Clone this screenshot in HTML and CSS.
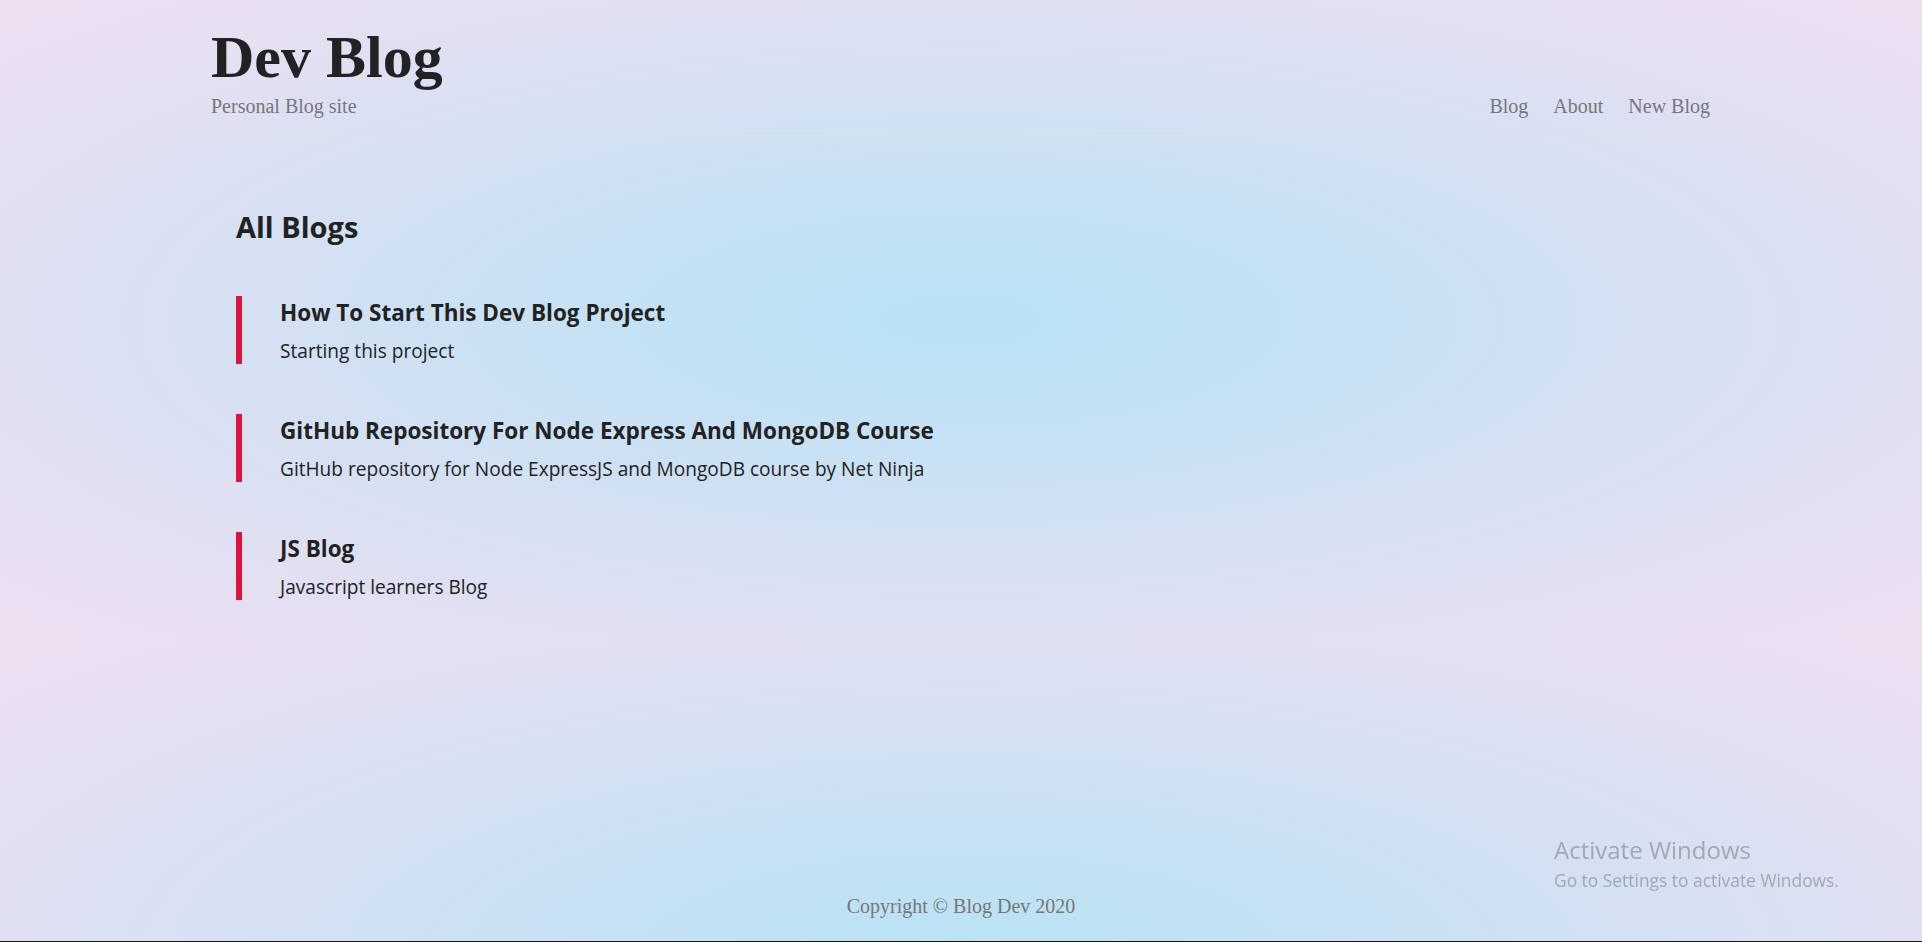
FILE: index.html
```html
<!DOCTYPE html>
<html lang="en">
<head>
<meta charset="utf-8">
<title>Dev Blog</title>
<link rel="stylesheet" href="styles.css">
</head>
<body>
  <div class="site">
    <header class="header">
      <div class="brand">
        <h1 class="brand-title">Dev Blog</h1>
        <p class="brand-sub">Personal Blog site</p>
      </div>
      <nav class="nav">
        <a href="#">Blog</a>
        <a href="#">About</a>
        <a href="#">New Blog</a>
      </nav>
    </header>
    <main class="content">
      <h2 class="page-title">All Blogs</h2>
      <div class="posts">
        <article class="post">
          <h3 class="post-title">How To Start This Dev Blog Project</h3>
          <p class="post-snippet">Starting this project</p>
        </article>
        <article class="post">
          <h3 class="post-title">GitHub Repository For Node Express And MongoDB Course</h3>
          <p class="post-snippet">GitHub repository for Node ExpressJS and MongoDB course by Net Ninja</p>
        </article>
        <article class="post">
          <h3 class="post-title">JS Blog</h3>
          <p class="post-snippet">Javascript learners Blog</p>
        </article>
      </div>
    </main>
  </div>
  <footer class="footer">Copyright © Blog Dev 2020</footer>
  <div class="taskbar-edge"></div>
  <div class="activate">
    <div class="activate-title">Activate Windows</div>
    <div class="activate-sub">Go to Settings to activate Windows.</div>
  </div>
</body>
</html>
```
FILE: styles.css
```css
html {
  min-height: 100%;
  background-color: #e4e0f2;
  background-image: radial-gradient(ellipse farthest-corner at 50% 50%, #b7e2f5 0%, #f0dff1 100%);
  background-size: 100% 640px;
  background-repeat: repeat;
}

body {
  margin: 0;
  min-height: 100vh;
  display: flex;
  flex-direction: column;
}

.site {
  width: 1500px;
  margin: 0 auto;
}

.header {
  display: flex;
  justify-content: space-between;
  align-items: flex-end;
  padding: 27px 0 12px;
  border-bottom: 1px solid #e3dfdb;
}

.brand-title {
  margin: 0;
  font-family: "Liberation Serif", "Times New Roman", serif;
  font-weight: bold;
  font-size: 60px;
  line-height: 60px;
  color: #222;
}

.brand-sub {
  margin: 7px 0 0;
  font-family: "Liberation Serif", "Times New Roman", serif;
  font-size: 20px;
  line-height: 24px;
  color: #777;
}

.nav {
  display: flex;
  gap: 25px;
  padding-right: 1px;
}

.nav a {
  font-family: "Liberation Serif", "Times New Roman", serif;
  font-size: 20px;
  line-height: 24px;
  color: #777;
  text-decoration: none;
}

.content {
  padding: 78px 25px 0;
  font-family: "Open Sans", "Noto Sans", sans-serif;
  color: #222;
}

.page-title {
  margin: 0;
  font-size: 29px;
  line-height: 36px;
  font-weight: 700;
}

.posts {
  margin-top: 51px;
}

.post {
  border-left: 6px solid #dc143c;
  padding: 3px 0 0 38px;
  margin-bottom: 50px;
}

.post-title {
  margin: 0;
  font-size: 22.5px;
  line-height: 28px;
  font-weight: 700;
}

.post-snippet {
  margin: 11px 0 0;
  font-size: 19.1px;
  line-height: 26px;
  font-weight: 400;
}

.footer {
  margin-top: auto;
  padding-bottom: 23px;
  text-align: center;
  font-family: "Liberation Serif", "Times New Roman", serif;
  font-size: 20px;
  line-height: 24px;
  color: #777;
}

.taskbar-edge {
  height: 1px;
  background: #161616;
}

.activate {
  position: fixed;
  left: 1554px;
  top: 836px;
  font-family: "Open Sans", "Noto Sans", sans-serif;
  color: #a4a7ad;
}

.activate-title {
  font-size: 24px;
  line-height: 28px;
}

.activate-sub {
  margin-top: 2px;
  font-size: 17.4px;
  line-height: 28px;
}
```
